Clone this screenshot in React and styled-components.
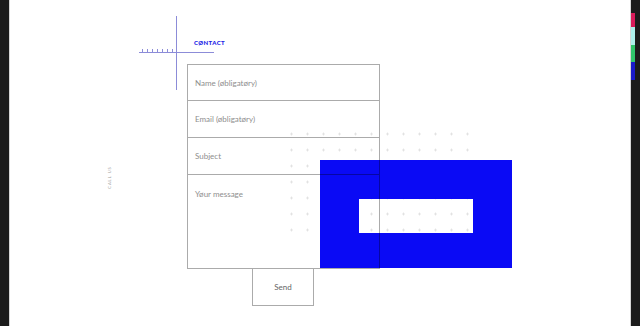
import React from 'react';
import styled, { createGlobalStyle } from 'styled-components';

const Global = createGlobalStyle`
  html, body { margin: 0; padding: 0; background: #fff; }
  body { font-family: "Lato", "Open Sans", sans-serif; }
  * { box-sizing: border-box; }
`

const Page = styled.div`
  display: flex;
  width: 640px;
  height: 326px;
  overflow: hidden;
`

const Rail = styled.div`
  width: ${p => p.$w}px;
  flex-shrink: 0;
  background: #1b1b1b;
  border-${p => p.$side}: 1px solid #d6d6d6;
  display: flex;
  flex-direction: column;
  padding-top: 13px;
`

const Strip = styled.span`
  width: 4px;
  height: ${p => p.$h}px;
  background: ${p => p.$c};
`

const Main = styled.main`
  flex: 1;
  position: relative;
  padding: 37px 0 0 177px;
`

const Heading = styled.h2`
  margin: 0 0 0 7px;
  height: 27px;
  font-size: 6px;
  font-weight: 900;
  letter-spacing: 0.4px;
  color: #1a1ae6;
  line-height: 12px;
`

const Form = styled.form`
  position: relative;
  z-index: 3;
  width: 193px;
  display: flex;
  flex-direction: column;
`

const Field = styled.div`
  height: ${p => p.$h}px;
  border: 1px solid rgba(0, 0, 0, 0.33);
  border-top-width: ${p => (p.$first ? 1 : 0)}px;
  padding: ${p => (p.$tall ? 14 : 0)}px 7px 0;
  display: flex;
  align-items: ${p => (p.$tall ? 'flex-start' : 'center')};
  font-size: 8px;
  font-weight: 400;
  color: #8e8e8e;
`

const SendButton = styled.button`
  margin-left: 65px;
  width: 62px;
  height: 37px;
  border: 1px solid rgba(0, 0, 0, 0.33);
  border-top: none;
  background: transparent;
  font-family: "Lato", sans-serif;
  font-weight: 400;
  font-size: 8px;
  color: #666;
  padding: 0;
`

const Cross = styled.svg`
  position: absolute;
  left: 129px;
  top: 16px;
`

const Dots = styled.svg`
  position: absolute;
  left: 280px;
  top: 132px;
  z-index: 1;
`

const BlueFrame = styled.div`
  position: absolute;
  left: 310px;
  top: 160px;
  width: 192px;
  height: 108px;
  border-style: solid;
  border-color: #0a0af5;
  border-width: 39px 39px 35px 39px;
  z-index: 2;
`

const CallUs = styled.span`
  position: absolute;
  left: 88px;
  top: 175px;
  transform: rotate(-90deg);
  font-size: 4px;
  letter-spacing: 1px;
  color: #9a9a9a;
  white-space: nowrap;
`

export default function App() {
  const ticks = [3, 8, 13, 18, 23, 28, 33];
  const cols = Array.from({ length: 12 }, (_, i) => i);
  const rows = Array.from({ length: 7 }, (_, i) => i);

  return (
    <>
      <Global />
      <Page>
        <Rail $w={10} $side="right" />
        <Main>
          <Cross width="75" height="75" viewBox="0 0 75 75">
            <line x1="37.5" y1="0" x2="37.5" y2="74" stroke="#8c8cd8" strokeWidth="1" />
            <line x1="0" y1="36.5" x2="75" y2="36.5" stroke="#8c8cd8" strokeWidth="1" />
            {ticks.map(x => (
              <line key={x} x1={x + 0.5} y1="33" x2={x + 0.5} y2="36.5" stroke="#8c8cd8" strokeWidth="1" />
            ))}
          </Cross>
          <Dots width="184" height="104" viewBox="0 0 184 104">
            {rows.map(r =>
              cols.map(c => (
                <g key={`${r}-${c}`} stroke="#d6d6d6" strokeWidth="0.6">
                  <line x1={c * 16} y1={r * 16 + 2} x2={c * 16 + 3} y2={r * 16 + 2} />
                  <line x1={c * 16 + 1.5} y1={r * 16 + 0.5} x2={c * 16 + 1.5} y2={r * 16 + 3.5} />
                </g>
              ))
            )}
          </Dots>
          <BlueFrame />
          <CallUs>CALL US</CallUs>
          <Heading>CØNTACT</Heading>
          <Form onSubmit={e => e.preventDefault()}>
            <Field $h={37} $first>Name (øbligatøry)</Field>
            <Field $h={37}>Email (øbligatøry)</Field>
            <Field $h={37}>Subject</Field>
            <Field $h={94} $tall>Yøur message</Field>
            <SendButton type="submit">Send</SendButton>
          </Form>
        </Main>
        <Rail $w={10} $side="left">
          <Strip $h={14} $c="#d81b5a" />
          <Strip $h={18} $c="#aef0ec" />
          <Strip $h={17} $c="#2fc46a" />
          <Strip $h={18} $c="#1a1ac8" />
        </Rail>
      </Page>
    </>
  );
}
